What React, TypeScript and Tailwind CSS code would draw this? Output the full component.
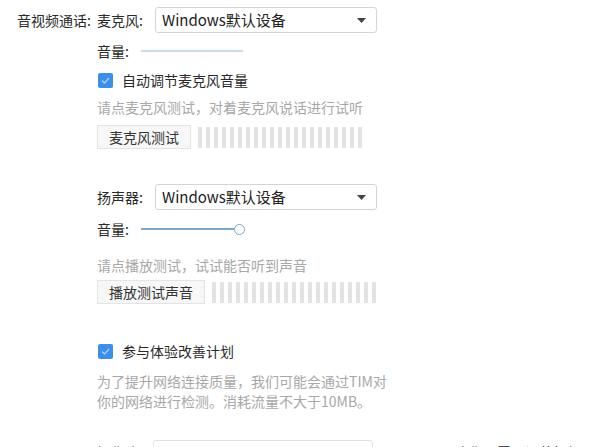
import React from 'react';

const font = { fontFamily: '"Noto Sans CJK SC", "Noto Sans", sans-serif' };

const Select: React.FC<{ value: string }> = ({ value }) => (
  <div className="flex h-[26px] w-[222px] items-center justify-between rounded-[3px] border border-[#d4d4d4] bg-white pl-[6px] pr-[10px] text-[15px] text-[#222]">
    <span>{value}</span>
    <svg width="9" height="5" viewBox="0 0 9 5">
      <path d="M0 0 L9 0 L4.5 5 Z" fill="#444" />
    </svg>
  </div>
);

const Checkbox: React.FC<{ label: string }> = ({ label }) => (
  <div className="flex h-5 items-center">
    <div className="ml-px flex h-[15px] w-[15px] items-center justify-center rounded-[2px] bg-[#3d8ee6]">
      <svg width="9" height="7" viewBox="0 0 9 7">
        <path d="M1 3.5 L3.5 6 L8 1" stroke="#a9cdf5" strokeWidth="1.3" fill="none" />
      </svg>
    </div>
    <span className="ml-[9px] text-[14px] text-[#2a2a2a]">{label}</span>
  </div>
);

const Meter: React.FC = () => (
  <div className="flex h-[21px] gap-[4px]">
    {Array.from({ length: 21 }).map((_, i) => (
      <div key={i} className="h-full w-[4px] bg-[#e3e3e3]" />
    ))}
  </div>
);

const TestButton: React.FC<{ label: string }> = ({ label }) => (
  <div className="flex h-[24px] items-center border border-[#e4e4e4] bg-[#f7f7f7] px-[11px] text-[14px] text-[#333]">
    {label}
  </div>
);

export default function App() {
  return (
    <div className="relative h-[447px] w-[612px] overflow-hidden bg-white" style={font}>
      <div className="flex">
        <div className="w-[97px] shrink-0 pl-[17px] pt-[10px] text-[14px] leading-5 text-[#2a2a2a]">音视频通话:</div>

        <div className="flex flex-col">
          <div className="mt-[7px] flex h-[26px] items-center">
            <span className="w-[58px] text-[14px] text-[#2a2a2a]">麦克风:</span>
            <Select value="Windows默认设备" />
          </div>

          <div className="mt-[8px] flex h-5 items-center">
            <span className="w-[44px] text-[14px] text-[#2a2a2a]">音量:</span>
            <div className="h-[2px] w-[102px] bg-[#c6dce9]" />
          </div>

          <div className="mt-[9px]">
            <Checkbox label="自动调节麦克风音量" />
          </div>

          <div className="mt-[7px] h-5 text-[14px] leading-5 text-[#a8a8a8]">请点麦克风测试，对着麦克风说话进行试听</div>

          <div className="mt-[8px] flex items-center gap-[7px]">
            <TestButton label="麦克风测试" />
            <Meter />
          </div>

          <div className="mt-[35px] flex h-[26px] items-center">
            <span className="w-[58px] text-[14px] text-[#2a2a2a]">扬声器:</span>
            <Select value="Windows默认设备" />
          </div>

          <div className="mt-[9px] flex h-5 items-center">
            <span className="w-[44px] text-[14px] text-[#2a2a2a]">音量:</span>
            <div className="h-[2px] w-[93px] bg-[#7ea8c9]" />
            <div className="h-[11px] w-[11px] rounded-full border border-[#7ea8c9] bg-white" />
          </div>

          <div className="mt-[16px] h-5 text-[14px] leading-5 text-[#a8a8a8]">请点播放测试，试试能否听到声音</div>

          <div className="mt-[5px] flex items-center gap-[7px]">
            <TestButton label="播放测试声音" />
            <Meter />
          </div>

          <div className="mt-[37px]">
            <Checkbox label="参与体验改善计划" />
          </div>

          <div className="mt-[10px] text-[14px] leading-5 text-[#a8a8a8]">
            <div>为了提升网络连接质量，我们可能会通过TIM对</div>
            <div>你的网络进行检测。消耗流量不大于10MB。</div>
          </div>

          <div className="mt-[29px] flex h-[26px] items-start">
            <span className="mt-[2px] w-[56px] text-[14px] text-[#2a2a2a]">摄像头:</span>
            <div className="h-[26px] w-[220px] rounded-[3px] border border-[#e0e0e0]" />
            <span className="ml-[82px] mt-[2px] text-[14px] text-[#2a2a2a]">头像设置，调节相机</span>
          </div>
        </div>
      </div>
    </div>
  );
}
